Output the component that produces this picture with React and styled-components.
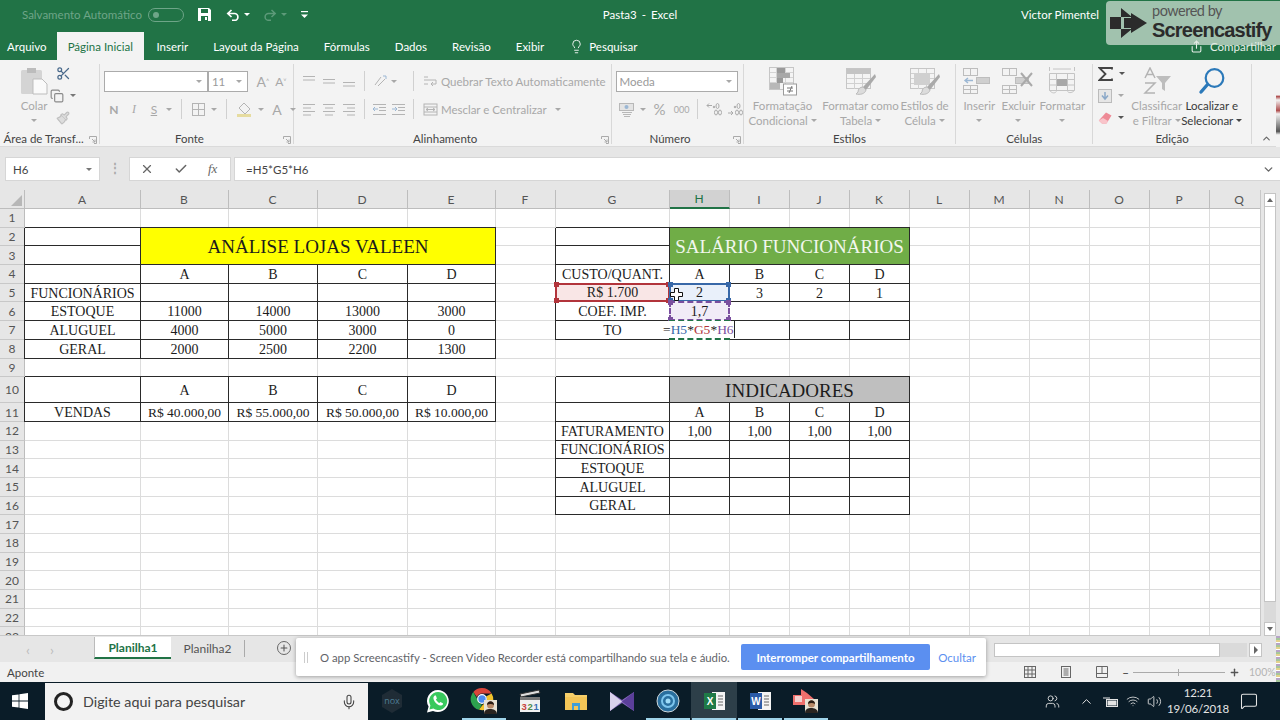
import React from "react";
import styled, { createGlobalStyle } from "styled-components";
import { Scissors, Copy, Paintbrush, Lightbulb, Share, ChevronUp, ChevronDown, X, Check, Plus, Mic, Users, Volume2, MessageSquare, Wifi } from "lucide-react";

const UI = `Lato, "Open Sans", "Liberation Sans", sans-serif`;
const SERIF = `"Liberation Serif", "Times New Roman", serif`;

const Global = createGlobalStyle`
  html, body { margin: 0; padding: 0; background: #fff; }
  * { box-sizing: border-box; }
`;

const Page = styled.div`
  position: relative;
  width: 1280px;
  height: 720px;
  overflow: hidden;
  display: flex;
  flex-direction: column;
  font-family: ${UI};
  font-size: 11.5px;
  color: #444;
  background: #f3f3f3;
`;

/* title + tabs */
const TitleBar = styled.div`
  height: 32px;
  padding-bottom: 3px;
  background: #217346;
  display: grid;
  grid-template-columns: 1fr auto 1fr;
  align-items: center;
  color: #fff;
`;
const Quick = styled.div`
  display: flex;
  align-items: center;
  padding-left: 22px;
`;
const AutoSave = styled.span`
  color: #6ea588;
  width: 126px;
  white-space: nowrap;
`;
const Toggle = styled.span`
  width: 36px;
  height: 14px;
  border: 1px solid #6ea588;
  border-radius: 8px;
  margin-right: 13px;
  display: flex;
  align-items: center;
  padding-left: 4px;
  &::before {
    content: "";
    width: 6px;
    height: 6px;
    border-radius: 50%;
    background: #6ea588;
  }
`;
const QuickBtn = styled.span`
  display: flex;
  align-items: center;
  gap: 4px;
  margin-right: ${p => p.$gap || 12}px;
`;
const Title = styled.div`
  word-spacing: 2px;
`;
const User = styled.div`
  justify-self: end;
  padding-right: 181px;
`;
const TabBar = styled.div`
  height: 28px;
  background: #217346;
  display: flex;
  align-items: stretch;
  padding-left: 7px;
  color: #fff;
`;
const Tab = styled.div`
  display: flex;
  align-items: center;
  padding: 0 ${p => (p.$active ? 11 : 12.5)}px;
  background: ${p => (p.$active ? "#f3f3f3" : "transparent")};
  color: ${p => (p.$active ? "#217346" : "#fff")};
  gap: 5px;
`;
const FileTab = styled(Tab)`
  margin-left: -7px;
  padding: 0 10px 0 7px;
`;
const ShareBox = styled.div`
  margin-left: auto;
  display: flex;
  align-items: center;
  gap: 7px;
  padding-right: 4px;
  color: #e8f0ea;
`;

/* ribbon */
const Ribbon = styled.div`
  height: 87px;
  display: flex;
  padding-top: 4px;
  background: #f3f3f3;
  border-bottom: 1px solid #dadada;
`;
const Group = styled.div`
  width: ${p => p.$w}px;
  height: 80px;
  display: flex;
  flex-direction: column;
  border-right: ${p => (p.$last ? "none" : "1px solid #d8d8d8")};
`;
const GroupBody = styled.div`
  height: 67px;
  flex: none;
  display: flex;
  padding-left: ${p => p.$pad || 0}px;
`;
const GroupLabel = styled.div`
  position: relative;
  height: 14px;
  line-height: 16px;
  flex: none;
  text-align: center;
  color: #444;
  padding-right: ${p => (p.$launch ? 14 : 0)}px;
  svg { position: absolute; right: 2px; top: 5px; }
`;
const CollapseRow = styled.div`
  height: 14px;
  padding: 2px 0 0 9px;
`;
const Stack = styled.div`
  display: flex;
  flex-direction: column;
  gap: 8px;
  padding-top: 7px;
`;
const Row = styled.div`
  height: 20px;
  display: flex;
  align-items: center;
`;
const Slot = styled.span`
  width: ${p => p.$w || 20}px;
  display: flex;
  justify-content: center;
  align-items: center;
  color: #a8a8a8;
  font-size: ${p => p.$size || 12}px;
  font-weight: ${p => (p.$bold ? 700 : 400)};
  font-style: ${p => (p.$italic ? "italic" : "normal")};
  text-decoration: ${p => (p.$under ? "underline" : "none")};
  font-family: ${p => (p.$serif ? SERIF : UI)};
`;
const Tiny = styled.sup`
  font-size: 7px;
`;
const VLine = styled.span`
  width: 1px;
  height: 20px;
  margin: 0 ${p => p.$mr ?? (p.$m || 7)}px 0 ${p => p.$m || 7}px;
  background: #d0d0d0;
`;
const Combo = styled.div`
  width: ${p => p.$w}px;
  height: 21px;
  margin-right: ${p => p.$mr || 0}px;
  background: #fff;
  border: 1px solid #ababab;
  display: flex;
  align-items: center;
  justify-content: space-between;
  padding: 0 5px 0 3px;
  color: #9a9a9a;
`;
const Caret = styled.span`
  width: 0;
  height: 0;
  border-left: 3px solid transparent;
  border-right: 3px solid transparent;
  border-top: 3px solid ${p => p.$color || "#a8a8a8"};
  display: inline-block;
`;
const BigButton = styled.div`
  width: ${p => p.$w}px;
  display: flex;
  flex-direction: column;
  align-items: center;
  color: ${p => (p.$on ? "#3a3a3a" : "#a8a8a8")};
  line-height: 15px;
  text-align: center;
  white-space: nowrap;
`;
const BigIcon = styled.div`
  height: 34px;
  flex: none;
  display: flex;
  align-items: center;
  justify-content: center;
`;
const CaretLine = styled.span`
  display: flex;
  align-items: center;
  gap: 3px;
  height: 15px;
`;
const SmallCol = styled.div`
  width: ${p => p.$w}px;
  display: flex;
  flex-direction: column;
  align-items: ${p => (p.$center ? "center" : "flex-start")};
  gap: 5px;
  padding-top: 1px;
`;
const SmallItem = styled.div`
  height: 17px;
  display: flex;
  align-items: center;
  gap: 6px;
`;
const Faded = styled.span`
  color: #a8a8a8;
  display: flex;
  align-items: center;
  gap: 3px;
  white-space: nowrap;
`;
const WrapCol = styled.div`
  display: flex;
  flex-direction: column;
  gap: 8px;
  padding-top: 7px;
  margin-left: 9px;
`;

/* formula bar */
const FormulaStrip = styled.div`
  height: 43px;
  background: #e6e6e6;
  padding: 10px 0 9px 5px;
  display: flex;
  align-items: stretch;
`;
const NameBox = styled.div`
  width: 95px;
  background: #fff;
  border: 1px solid #d6d6d6;
  display: flex;
  align-items: center;
  justify-content: space-between;
  padding: 0 7px;
  color: #444;
`;
const Dots = styled.span`
  width: 29px;
  text-align: center;
  color: #aaa;
  line-height: 22px;
  font-weight: 700;
`;
const FxBox = styled.div`
  width: 102px;
  margin-right: 3px;
  background: #fff;
  border: 1px solid #d6d6d6;
  display: flex;
  align-items: center;
  padding-left: 10px;
  overflow: hidden;
`;
const FxItem = styled.span`
  width: 34px;
  flex: none;
  display: flex;
  justify-content: flex-start;
  color: #666;
  font-family: ${p => (p.$serif ? SERIF : UI)};
  font-style: ${p => (p.$serif ? "italic" : "normal")};
  font-size: 13px;
`;
const FormulaInput = styled.div`
  flex: 1;
  background: #fff;
  border: 1px solid #d6d6d6;
  border-right: none;
  display: flex;
  align-items: center;
  justify-content: space-between;
  padding: 0 5px 0 11px;
  color: #444;
`;

/* sheet */
const SheetWrap = styled.div`
  height: 447px;
  display: flex;
  background: #e6e6e6;
`;
const SheetClip = styled.div`
  width: 1261px;
  height: 446px;
  overflow: hidden;
  border-right: 1px solid #c8c8c8;
  border-bottom: 1px solid #c8c8c8;
  background: #fff;
`;
const Sheet = styled.div`
  display: grid;
  grid-template-columns: ${p => p.$cols};
  grid-template-rows: ${p => p.$rows};
  width: 1270px;
`;
const Corner = styled.div`
  background: #e6e6e6;
  border-right: 1px solid #bdbdbd;
  border-bottom: 1px solid #bdbdbd;
  position: relative;
  &::after {
    content: "";
    position: absolute;
    right: 2px;
    bottom: 2px;
    border-left: 11px solid transparent;
    border-bottom: 11px solid #b7b7b7;
  }
`;
const ColHead = styled.div`
  display: flex;
  align-items: center;
  justify-content: center;
  padding-right: 1px;
  font-size: 12px;
  background: ${p => (p.$on ? "#d2d2d2" : "#e6e6e6")};
  color: ${p => (p.$on ? "#217346" : "#555")};
  border-right: 1px solid #bdbdbd;
  border-bottom: ${p => (p.$on ? "2px solid #217346" : "1px solid #bdbdbd")};
`;
const RowHead = styled.div`
  display: flex;
  align-items: center;
  justify-content: center;
  font-size: 12px;
  background: #e6e6e6;
  color: #555;
  border-right: 1px solid #bdbdbd;
  border-bottom: 1px solid #c8c8c8;
`;
const edgeShadow = e => {
  const s = [];
  if (e.includes("l")) s.push("-1px 0 0 #2a2a2a");
  if (e.includes("t")) s.push("0 -1px 0 #2a2a2a");
  return s.length ? s.join(",") : "none";
};
const Cell = styled.div`
  position: relative;
  min-width: 0;
  padding-top: 2px;
  display: flex;
  align-items: center;
  justify-content: center;
  white-space: nowrap;
  font-family: ${SERIF};
  font-size: ${p => p.$size || 14}px;
  color: ${p => p.$color || "#1c1c1c"};
  background: ${p => p.$bg || "#fff"};
  grid-column: span ${p => p.$cs || 1};
  grid-row: span ${p => p.$rs || 1};
  border-right: 1px solid ${p => ((p.$edges || "").includes("r") ? "#2a2a2a" : "#dcdcdc")};
  border-bottom: 1px solid ${p => ((p.$edges || "").includes("b") ? "#2a2a2a" : "#dcdcdc")};
  box-shadow: ${p => edgeShadow(p.$edges || "")};
`;
const RefBox = styled.div`
  position: absolute;
  inset: -1px;
  z-index: 2;
  padding-top: 1px;
  background: ${p => p.$fill};
  border: 2px ${p => (p.$dashed ? "dashed" : "solid")} ${p => p.$color};
  display: flex;
  align-items: center;
  justify-content: center;
`;
const Handle = styled.span`
  position: absolute;
  width: 5px;
  height: 5px;
  background: ${p => p.$color};
  top: ${p => (p.$y === "t" ? "-3px" : "auto")};
  bottom: ${p => (p.$y === "b" ? "-3px" : "auto")};
  left: ${p => (p.$x === "l" ? "-3px" : "auto")};
  right: ${p => (p.$x === "r" ? "-3px" : "auto")};
`;
const EditText = styled.div`
  position: absolute;
  z-index: 3;
  left: -7px;
  right: -6px;
  top: 0;
  bottom: 1px;
  padding-top: 1px;
  font-size: 13.5px;
  background: #fff;
  border-right: 1px solid #222;
  display: flex;
  align-items: center;
`;
const Ref = styled.span`
  color: ${p => p.$color};
`;
const MousePointer = styled.svg`
  position: absolute;
  left: -1px;
  top: 3px;
  z-index: 4;
`;

/* scroll */
const VScroll = styled.div`
  width: 19px;
  padding: 3px 4px 0 3px;
  display: flex;
  flex-direction: column;
  height: 446px;
`;
const ArrowBox = styled.div`
  height: 14px;
  background: #fff;
  border: 1px solid #c4c4c4;
  display: flex;
  align-items: center;
  justify-content: center;
  flex: none;
`;
const ScrollThumb = styled.div`
  flex: 1;
  background: #fff;
  border: 1px solid #c4c4c4;
  border-top: none;
`;
const ScrollRest = styled.div`
  height: 20px;
  background: #dadada;
`;
const TriUp = styled.span`
  border-left: 3px solid transparent;
  border-right: 3px solid transparent;
  border-bottom: 4px solid #666;
`;
const TriDown = styled.span`
  border-left: 3px solid transparent;
  border-right: 3px solid transparent;
  border-top: 4px solid #666;
`;
const TriRight = styled.span`
  border-top: 4px solid transparent;
  border-bottom: 4px solid transparent;
  border-left: 4px solid #666;
`;

/* sheet tabs + status */
const SheetTabs = styled.div`
  height: 25px;
  background: #e6e6e6;
  display: flex;
  align-items: stretch;
`;
const NavArrows = styled.div`
  width: 94px;
  display: flex;
  align-items: center;
  gap: 20px;
  padding-left: 26px;
  color: #bbb;
  font-size: 14px;
`;
const SheetTab = styled.div`
  width: ${p => p.$w}px;
  display: flex;
  align-items: center;
  justify-content: center;
  background: ${p => (p.$active ? "#fff" : "transparent")};
  color: ${p => (p.$active ? "#217346" : "#555")};
  font-weight: ${p => (p.$active ? 700 : 400)};
  font-size: 12px;
  border-bottom: ${p => (p.$active ? "2px solid #217346" : "none")};
  border-right: ${p => (p.$active ? "none" : "1px solid #aaa")};
  border-left: ${p => (p.$active ? "1px solid #bbb" : "none")};
  margin: ${p => (p.$active ? "0 0 3px" : "3px 0 5px")};
`;
const AddSheet = styled.div`
  width: 14px;
  height: 14px;
  margin: 4px 0 0 32px;
  border: 1px solid #666;
  border-radius: 50%;
  display: flex;
  align-items: center;
  justify-content: center;
  color: #555;
`;
const HScroll = styled.div`
  margin-left: auto;
  width: 286px;
  padding: 6px 18px 0 0;
  display: flex;
  align-items: flex-start;
`;
const HTrack = styled.div`
  width: 233px;
  height: 14px;
  background: #fff;
  border: 1px solid #c4c4c4;
`;
const HRest = styled.div`
  width: 28px;
  height: 14px;
  background: #dadada;
`;
const HArrow = styled(ArrowBox)`
  width: 13px;
  margin-left: 2px;
`;
const StatusBar = styled.div`
  height: 20px;
  background: #f1f1f1;
  display: flex;
  align-items: center;
  padding-left: 7px;
  color: #444;
`;
const StatusRight = styled.div`
  margin-left: auto;
  display: flex;
  align-items: center;
  padding-right: 5px;
  color: #555;
`;
const ViewBtn = styled.span`
  width: 36px;
  display: flex;
  justify-content: center;
`;
const ZoomTrack = styled.span`
  width: 92px;
  height: 1px;
  background: #aaa;
  margin: 0 4px;
  position: relative;
  &::after {
    content: "";
    position: absolute;
    left: 45px;
    top: -3px;
    width: 1px;
    height: 7px;
    background: #aaa;
  }
`;
const ZoomMinus = styled.span`
  font-weight: 700;
  margin-left: 2px;
`;
const ZoomPct = styled.span`
  color: #b4b4b4;
  margin-left: 9px;
  width: 26px;
  font-size: 10.5px;
  white-space: nowrap;
`;

/* taskbar */
const TaskBar = styled.div`
  height: 38px;
  background: #0a1c28;
  display: flex;
  align-items: stretch;
  color: #fff;
`;
const StartBtn = styled.div`
  width: 45px;
  padding-right: 5px;
  display: flex;
  align-items: center;
  justify-content: center;
`;
const SearchBox = styled.div`
  width: 323px;
  background: #f2f2f2;
  color: #444;
  font-size: 14.3px;
  display: flex;
  align-items: center;
  margin-top: 1px;
`;
const Ring = styled.span`
  width: 19px;
  height: 19px;
  border: 3px solid #222;
  border-radius: 50%;
  margin: 0 10px 0 9px;
`;
const MicSlot = styled.span`
  margin-left: auto;
  padding-right: 11px;
  display: flex;
  color: #444;
`;
const Apps = styled.div`
  display: flex;
  padding-left: 1px;
`;
const AppSlot = styled.div`
  position: relative;
  width: 46px;
  display: flex;
  align-items: center;
  justify-content: center;
  background: ${p => (p.$active ? "#2d3f49" : "transparent")};
  &::after {
    content: "";
    position: absolute;
    left: 1px;
    right: 1px;
    bottom: 0;
    height: 2px;
    background: ${p => (p.$open ? "#9fd4ea" : "transparent")};
  }
`;
const Tray = styled.div`
  margin-left: auto;
  display: flex;
  align-items: center;
  padding-right: 22px;
  color: #e4e4e4;
`;
const TraySlot = styled.span`
  width: ${p => p.$w || 22}px;
  display: flex;
  justify-content: center;
`;
const Clock = styled.div`
  width: 74px;
  margin: 0 5px 0 -3px;
  text-align: center;
  font-size: 11.5px;
  line-height: 16px;
  letter-spacing: -0.2px;
`;

/* overlays */
const Watermark = styled.div`
  position: absolute;
  left: 1106px;
  top: 1px;
  width: 174px;
  height: 44px;
  background: rgba(222, 232, 224, 0.68);
  border-radius: 4px 0 0 4px;
  display: flex;
  align-items: center;
  padding-left: 4px;
  overflow: hidden;
`;
const MarkText = styled.div`
  margin-left: 5px;
  color: #333;
  white-space: nowrap;
`;
const Powered = styled.div`
  font-size: 14.5px;
  line-height: 14px;
  letter-spacing: -0.5px;
  color: #555;
`;
const Brand = styled.div`
  font-family: "Liberation Sans", sans-serif;
  font-weight: 700;
  font-size: 20px;
  line-height: 25px;
  letter-spacing: -0.8px;
  color: #2b2b2b;
`;
const Notice = styled.div`
  position: absolute;
  left: 296px;
  top: 638px;
  width: 690px;
  height: 38px;
  background: #fff;
  box-shadow: 0 1px 4px rgba(0, 0, 0, 0.35);
  border-radius: 2px;
  display: flex;
  align-items: center;
  padding: 0 10px 0 8px;
  color: #5f6368;
  z-index: 6;
`;
const Grip = styled.span`
  width: 4px;
  height: 11px;
  border-left: 1px solid #ccc;
  border-right: 1px solid #ccc;
  margin-right: 12px;
`;
const NoticeText = styled.span`
  width: 421px;
  font-size: 11.35px;
  white-space: nowrap;
`;
const StopBtn = styled.div`
  width: 189px;
  height: 26px;
  border-radius: 2px;
  background: #5b8ff0;
  color: #fff;
  font-weight: 700;
  display: flex;
  align-items: center;
  justify-content: center;
`;
const HideLink = styled.span`
  margin-left: auto;
  color: #5b8ff0;
`;
const EdgeStrip = styled.div`
  position: absolute;
  right: 0;
  top: 636px;
  width: 4px;
  height: 46px;
  background: repeating-linear-gradient(180deg, #b6a4c8 0 2px, #a6c69a 2px 4px, #e4d28c 4px 6px, #fff 6px 7px);
`;
const EdgeDots = styled.div`
  position: absolute;
  right: 0;
  top: 60px;
  width: 4px;
  height: 87px;
  background: linear-gradient(180deg, #f3f3f3 0 40%, #b05050 42%, #f3f3f3 46%, #b05050 58%, #f3f3f3 62%, #555 82%, #f3f3f3 86%);
`;

const GRAY = "#b4b4b4";

const Launcher = () => (
  <svg width="8" height="8" viewBox="0 0 8 8" fill="none" stroke="#aaa" strokeWidth="1">
    <path d="M.5 3V.5H7.5V7.5H5M3 3l3 3M6 3.5V6H3.5" />
  </svg>
);
const Lines = ({ a = [12, 12, 12], align = "left", y = 0 }) => (
  <svg width="14" height="14" viewBox="0 0 14 14" stroke={GRAY} fill="none">
    {a.map((w, i) => {
      const x = align === "left" ? 1 : align === "right" ? 13 - w : 7 - w / 2;
      return <path key={i} d={`M${x} ${2.5 + y + i * 3.5}h${w}`} />;
    })}
  </svg>
);
const ArrowIndent = ({ dir }) => (
  <svg width="15" height="13" viewBox="0 0 15 13" stroke={GRAY} fill="none">
    <path d="M1 1.5h13M7 4.5h7M7 7.5h7M1 11.5h13" />
    <path d={dir === "l" ? "M6 6H1M3 4L1 6l2 2" : "M1 6h5M4 4l2 2-2 2"} stroke="#9bb7d4" />
  </svg>
);
const ClipIcon = () => (
  <svg width="28" height="28" viewBox="0 0 28 28">
    <rect x="1" y="3" width="21" height="24" rx="1.5" fill="#d4d4d4" />
    <rect x="7" y="1" width="9" height="5" fill="#bcbcbc" />
    <path d="M13 12h9l5 5v10H13z" fill="#fafafa" stroke="#bdbdbd" />
  </svg>
);
const SaveIcon = () => (
  <svg width="15" height="15" viewBox="0 0 15 15">
    <path d="M1 1h11l2 2v11H1z" fill="#fff" />
    <rect x="4" y="2" width="7" height="4" fill="#217346" />
    <rect x="4" y="9" width="7" height="5" fill="#217346" />
    <rect x="8" y="10" width="2" height="3" fill="#fff" />
  </svg>
);
const UndoIcon = () => (
  <svg width="14" height="12" viewBox="0 0 14 12" fill="none" stroke="#fff" strokeWidth="1.7">
    <path d="M5.5 1L1.8 4.5 5.5 8M2 4.5h6.5a3.4 3.4 0 010 6.8H6" />
  </svg>
);
const RedoIcon = () => (
  <svg width="14" height="12" viewBox="0 0 14 12" fill="none" stroke="#5d9a79" strokeWidth="1.5">
    <path d="M8.5 1l3.7 3.5L8.5 8M12 4.5H5.5a3.4 3.4 0 000 6.8H8" />
  </svg>
);
const Custom = () => (
  <svg width="7" height="8" viewBox="0 0 7 8" fill="#fff">
    <rect y="0" width="7" height="1.2" />
    <path d="M0 3.5h7L3.5 7z" />
  </svg>
);
const CondIcon = () => (
  <svg width="30" height="30" viewBox="0 0 30 30" fill="none">
    <rect x="1.5" y="1.5" width="24" height="22" fill="#f4f4f4" stroke="#c6c6c6" />
    <path d="M2 6.5h23M2 11.5h23M2 16.5h23M8.5 2v21M17.5 2v21" stroke="#d4d4d4" />
    <rect x="9" y="2" width="8" height="5" fill="#9a9a9a" />
    <rect x="9" y="7" width="13" height="5" fill="#a8a8a8" />
    <rect x="9" y="12" width="6" height="5" fill="#999" />
    <rect x="2" y="17" width="10" height="6" fill="#b8b8b8" />
    <rect x="15.5" y="18" width="13" height="11" fill="#fff" stroke="#9a9a9a" />
    <path d="M19 22h6M19 25h6M24 20l-3 7" stroke="#777" />
  </svg>
);
const BrushTable = ({ fill }) => (
  <svg width="32" height="29" viewBox="0 0 32 29" fill="none">
    <rect x="1.5" y="1.5" width="24" height="20" fill="#f4f4f4" stroke="#c6c6c6" />
    <path d="M2 6.5h23M2 11.5h23M2 16.5h23M9.5 2v20M17.5 2v20" stroke="#d0d0d0" />
    <rect x={fill ? 5 : 2} y={fill ? 6 : 2} width={fill ? 16 : 23} height={fill ? 12 : 5} fill={fill ? "#d0d0d0" : "#c4c4c4"} />
    <path d="M30 7L18 20l3 3L31 10z" fill="#aaa" />
    <path d="M18 20c-3 0-5 2-5 5l-2 2c4 1 9 0 10-4z" fill="#dcdcdc" stroke="#bbb" />
  </svg>
);
const CellsIcon = ({ kind }) => (
  <svg width="34" height="28" viewBox="0 0 34 28" fill="none" stroke="#bdbdbd">
    <rect x="1.5" y="1.5" width="14" height="7" />
    <path d="M8.5 1.5v7" />
    <rect x="1.5" y="18.5" width="14" height="8" />
    <path d="M8.5 18.5v8M1.5 22.5h14" />
    <rect x="14.5" y="10.5" width="13" height="6" fill="#cfcfcf" />
    {kind === "ins" ? (
      <path d="M11 13.5H3M6 11l-3 2.5L6 16" stroke="#9bb7d4" strokeWidth="1.4" />
    ) : (
      <path d="M20 6l11 13M31 6L20 19" stroke="#aaa" strokeWidth="2" />
    )}
  </svg>
);
const FormatIcon = () => (
  <svg width="28" height="30" viewBox="0 0 28 30" fill="none" stroke="#c4c4c4">
    <path d="M1.5 7.5h25v17h-25zM1.5 13.5h25M1.5 19h25M8.5 7.5v17M19.5 7.5v17M1.5 1v4M26.5 1v4M5 3h18" />
    <rect x="9" y="13" width="10" height="7" fill="#a8a8a8" stroke="none" />
    <path d="M1.5 24.5c3 3 5 3 7 1M19.5 25.5c2 2 5 1 7-1" />
  </svg>
);
const SortIcon = () => (
  <svg width="30" height="28" viewBox="0 0 30 28" fill="none" stroke="#b4b4b4" strokeWidth="1.5">
    <path d="M3 11L8 1l5 10M5 7.5h6M3 16h10L3 26h10" />
    <path d="M14 9h15l-6 7v8l-3-2v-6z" fill="#bdbdbd" stroke="none" />
  </svg>
);
const Magnifier = () => (
  <svg width="28" height="28" viewBox="0 0 28 28" fill="none">
    <circle cx="16.5" cy="11" r="8.8" stroke="#2b79b9" strokeWidth="2.2" />
    <path d="M9.5 17.5L3 25" stroke="#2b79b9" strokeWidth="3.4" strokeLinecap="round" />
  </svg>
);
const Sigma = () => (
  <svg width="15" height="14" viewBox="0 0 15 14" fill="none" stroke="#444" strokeWidth="1.8">
    <path d="M14 2.5V1H1.5L7.5 7l-6 6H14v-1.5" />
  </svg>
);
const FillBox = () => (
  <svg width="14" height="14" viewBox="0 0 14 14">
    <rect x="0.5" y="0.5" width="13" height="13" fill="#e6e6e6" stroke="#bbb" />
    <path d="M7 3v6M4 6.5L7 10l3-3.5" fill="none" stroke="#8aa8c8" strokeWidth="1.5" />
  </svg>
);
const Eraser = () => (
  <svg width="14" height="12" viewBox="0 0 14 12">
    <path d="M8 .5l5.5 3-5 8H4L.8 8.5z" fill="#ee8a96" />
    <path d="M.8 8.5L4 11.5h4.5L10 9 5 6z" fill="#f9c4ca" />
  </svg>
);
const CurrencyIcon = () => (
  <svg width="18" height="15" viewBox="0 0 18 15" fill="none" stroke="#b8b8b8">
    <rect x="1.5" y="1.5" width="14" height="7" fill="#e4e4e4" />
    <circle cx="8.5" cy="5" r="2" fill="#9bb7d4" stroke="none" />
    <path d="M4 10.5h10M5 12.5h8M6 14.5h6" />
  </svg>
);
const DecimalIcon = ({ up }) => (
  <svg width="16" height="14" viewBox="0 0 16 14" fill="none" stroke="#aaa">
    <path d={up ? "M1 3.5h5M3 1.5L1 3.5l2 2" : "M1 11h5M4 9l2 2-2 2"} />
    <circle cx="8" cy="5" r="0.8" fill="#aaa" />
    <ellipse cx="11.5" cy="4" rx="1.5" ry="2.5" />
    <ellipse cx="10" cy="10.5" rx="1.5" ry="2.5" />
    <ellipse cx="14" cy="10.5" rx="1.5" ry="2.5" />
  </svg>
);
const MergeIcon = () => (
  <svg width="15" height="13" viewBox="0 0 15 13" fill="none" stroke={GRAY}>
    <rect x="1" y="1" width="13" height="11" />
    <path d="M1 4h13M1 9h13M3 6.5h9M5 5L3 6.5 5 8M10 5l2 1.5L10 8" />
  </svg>
);
const WrapIcon = () => (
  <svg width="15" height="14" viewBox="0 0 15 14" fill="none" stroke={GRAY}>
    <path d="M1 3h4M1 6h12v4H8M10 8l-2 2 2 2M1 10h4" />
  </svg>
);
const OrientIcon = () => (
  <svg width="15" height="15" viewBox="0 0 15 15" fill="none" stroke={GRAY}>
    <path d="M3 11L9 3M6 12l7-7" />
    <path d="M11 2l3 0 0 3" stroke="#9bb7d4" />
  </svg>
);
const BorderIcon = () => (
  <svg width="13" height="13" viewBox="0 0 13 13" fill="none" stroke={GRAY}>
    <rect x="0.5" y="0.5" width="12" height="12" />
    <path d="M6.5 0v13M0 6.5h13" />
  </svg>
);
const BucketIcon = () => (
  <svg width="16" height="15" viewBox="0 0 16 15" fill="none" stroke={GRAY}>
    <path d="M7 1l6 6-5 5-6-6z" />
    <path d="M0 12h14v3H0z" fill="#e6dca0" stroke="none" />
  </svg>
);
const ViewGrid = () => (
  <svg width="12" height="12" viewBox="0 0 12 12" fill="none" stroke="#666">
    <rect x="0.5" y="0.5" width="11" height="11" />
    <path d="M4 0v12M8 0v12M0 4h12M0 8h12" />
  </svg>
);
const ViewPage = () => (
  <svg width="12" height="12" viewBox="0 0 12 12" fill="none" stroke="#666">
    <rect x="1.5" y="0.5" width="9" height="11" />
    <path d="M3.5 3h5M3.5 5h5M3.5 7h5M3.5 9h5" />
  </svg>
);
const ViewBreak = () => (
  <svg width="12" height="12" viewBox="0 0 12 12" fill="none" stroke="#666">
    <path d="M.5 11.5V.5h11v11zM.5 7.5h11M6 .5v7" />
  </svg>
);
const WinLogo = () => (
  <svg width="16" height="16" viewBox="0 0 16 16" fill="#fff">
    <path d="M0 2.3l6.6-.9v6.2H0zM7.4 1.3L16 0v7.6H7.4zM0 8.4h6.6v6.2L0 13.7zM7.4 8.4H16V16l-8.6-1.3z" />
  </svg>
);
const Nox = () => (
  <svg width="22" height="24" viewBox="0 0 22 24">
    <path d="M11 0l10 6v12l-10 6-10-6V6z" fill="#1f2c36" />
    <text x="11" y="15" fontSize="9" fill="#4f7f96" textAnchor="middle" fontFamily="Open Sans">nox</text>
  </svg>
);
const Whats = () => (
  <svg width="24" height="24" viewBox="0 0 24 24">
    <path d="M12 1a11 11 0 00-9.4 16.6L1 23.5l6-1.6A11 11 0 1012 1z" fill="#fff" />
    <path d="M12 3a9 9 0 00-7.6 13.6L3.4 20.6l4-1A9 9 0 1012 3z" fill="#38c95d" />
    <path d="M8.8 6.5c-1.6 1-2 3-.3 5.8 1.7 2.8 4.5 4.6 6.6 4.2 1-.2 2-1 2-2.1l-2.6-1.4-1.2 1.1c-1-.3-2.9-2.3-3.4-3.5l1-1.2-1-2.8z" fill="#fff" />
  </svg>
);
const Face = ({ x, y }) => (
  <g>
    <rect x={x} y={y} width="13" height="14" fill="#e8e2d4" />
    <path d={`M${x} ${y + 14}c0-4 3-5 6-5s7 1 7 5z`} fill="#2a2420" />
    <circle cx={x + 6.5} cy={y + 5} r="3.5" fill="#b98a68" />
    <path d={`M${x + 3} ${y + 5}c0-5 7-5 7 0-2-1.5-5-1.5-7 0z`} fill="#2a1c14" />
  </g>
);
const ChromeIcon = () => (
  <svg width="28" height="28" viewBox="0 0 28 28">
    <path d="M12 1a11 11 0 019.6 5.5H12a5.5 5.5 0 00-5.1 3.5L3.3 5A11 11 0 0112 1z" fill="#d9453a" />
    <path d="M3.3 5l4.4 8a5 5 0 004.3 4.500L9 22.800A11 11 0 013.300 5z" fill="#2da24e" />
    <path d="M21.6 6.5A11 11 0 019 22.6l4-5.2a5 5 0 003-8z" fill="#f2c32c" />
    <circle cx="12" cy="12" r="4.3" fill="#4b8bf0" stroke="#fff" strokeWidth="1.2" />
    <Face x={14} y={13} />
  </svg>
);
const Clapper = () => (
  <svg width="22" height="24" viewBox="0 0 22 24">
    <path d="M1 5l19-4 1 3-19 4z" fill="#ddd" stroke="#333" />
    <rect x="1" y="8" width="20" height="15" fill="#f1f1f1" />
    <rect x="1" y="8" width="20" height="3" fill="#777" />
    <text x="2.5" y="21" fontSize="9.5" fontWeight="700" fill="#c8433c" fontFamily="Liberation Sans">3</text>
    <text x="8.5" y="21" fontSize="9.5" fontWeight="700" fill="#4d8a4a" fontFamily="Liberation Sans">2</text>
    <text x="14.5" y="21" fontSize="9.5" fontWeight="700" fill="#3a6fb5" fontFamily="Liberation Sans">1</text>
  </svg>
);
const Folder = () => (
  <svg width="22" height="18" viewBox="0 0 22 18">
    <path d="M0 1h8l2 2h12v15H0z" fill="#f6cf6a" />
    <rect x="0" y="5" width="22" height="13" fill="#f3c557" />
    <path d="M7 11h8v7h-2v-4H9v4H7z" fill="#3f9ed8" />
  </svg>
);
const VsIcon = () => (
  <svg width="24" height="21" viewBox="0 0 24 21">
    <path d="M0 1l12 8 12-8v19L12 12 0 20z" fill="#8a6cc0" />
    <path d="M0 1l12 9.5L0 20z" fill="#d9d2ec" />
    <path d="M24 1L12 10.5 24 20z" fill="#5b3f9a" />
  </svg>
);
const GlobeIcon = () => (
  <svg width="24" height="24" viewBox="0 0 24 24" fill="none">
    <circle cx="12" cy="12" r="11" fill="#2a6f9e" stroke="#cfd8dc" />
    <circle cx="12" cy="12" r="6" stroke="#7ec6ee" strokeWidth="2" />
    <circle cx="12" cy="12" r="2.5" fill="#9fdcf8" />
  </svg>
);
const OfficeTile = ({ letter, bg, lines }) => (
  <svg width="21" height="20" viewBox="0 0 21 20">
    <rect x="8" y="1" width="13" height="18" fill="#f4f4f4" />
    <path d={lines} stroke="#666" fill="none" />
    <rect x="0" y="2" width="12" height="16" fill={bg} />
    <text x="6" y="14" fontSize="10" fontWeight="700" fill="#fff" textAnchor="middle" fontFamily="Liberation Sans">{letter}</text>
  </svg>
);
const PptLike = () => (
  <svg width="26" height="28" viewBox="0 0 26 28">
    <path d="M0 8l8 0 0-6 6 4 7 6-7 6H0z" fill="#ef6f6c" />
    <rect x="2" y="9" width="7" height="6" fill="#f4d0ce" />
    <Face x={12} y={12} />
  </svg>
);
const CastLogo = () => (
  <svg width="37" height="32" viewBox="0 0 37 32" fill="#2b2b2b">
    <rect x="0" y="10" width="11" height="12" />
    <path d="M11 1l11 9H11zM11 22h11L11 31zM14 11h7V6l16 10-16 10v-5h-7z" />
  </svg>
);

const COLS = ["A", "B", "C", "D", "E", "F", "G", "H", "I", "J", "K", "L", "M", "N", "O", "P", "Q"];
const COL_W = [116, 88, 89, 90, 88, 60, 114, 60, 60, 60, 60, 60, 60, 60, 60, 60, 60];
const ROW_COUNT = 23;
const rowH = r => (r === 10 ? 26 : 18.7);

const ALL = "lrtb";
const fill = (cols, rows, text = {}, edges = ALL, size) => {
  const out = {};
  cols.split("").forEach(c => rows.forEach(r => {
    out[c + r] = { edges, text: text[c + r], size };
  }));
  return out;
};

const cells = {
  ...fill("A", [2, 3, 4, 5, 6, 7, 8], { A5: "FUNCIONÁRIOS", A6: "ESTOQUE", A7: "ALUGUEL", A8: "GERAL" }),
  ...fill("BCDE", [4, 5, 6, 7, 8], {
    B4: "A", C4: "B", D4: "C", E4: "D",
    B6: "11000", C6: "14000", D6: "13000", E6: "3000",
    B7: "4000", C7: "5000", D7: "3000", E7: "0",
    B8: "2000", C8: "2500", D8: "2200", E8: "1300",
  }),
  B2: { edges: ALL, text: "ANÁLISE LOJAS VALEEN", cs: 4, rs: 2, bg: "#ffff00", size: 19 },
  ...fill("A", [10, 11], { A11: "VENDAS" }),
  ...fill("BCDE", [10], { B10: "A", C10: "B", D10: "C", E10: "D" }),
  ...fill("BCDE", [11], {
    B11: "R$ 40.000,00", C11: "R$ 55.000,00", D11: "R$ 50.000,00", E11: "R$ 10.000,00",
  }, ALL, 13.5),
  ...fill("G", [2, 3, 4, 6, 7], { G4: "CUSTO/QUANT.", G6: "COEF. IMP.", G7: "TO" }),
  H2: { edges: ALL, text: "SALÁRIO FUNCIONÁRIOS", cs: 4, rs: 2, bg: "#70ad47", color: "#f2f7ee", size: 19 },
  ...fill("HIJK", [4], { H4: "A", I4: "B", J4: "C", K4: "D" }),
  ...fill("IJK", [5], { I5: "3", J5: "2", K5: "1" }),
  ...fill("IJ", [6], {}, "b"),
  K6: { edges: "rb" },
  ...fill("IJK", [7]),
  G5: { edges: ALL, ref: { color: "#b2343b", fill: "#f9e6e6", text: "R$ 1.700" } },
  H5: { edges: ALL, ref: { color: "#3868a8", fill: "#e9f0fa", text: "2", pointer: true } },
  H6: { edges: ALL, ref: { color: "#7a4f9f", fill: "#f1ecf7", text: "1,7", dashed: true } },
  H7: { edges: ALL, ref: { color: "#217346", fill: "#fff", dashed: true }, editing: true },
  ...fill("G", [10, 11, 12, 13, 14, 15, 16], {
    G12: "FATURAMENTO", G13: "FUNCIONÁRIOS", G14: "ESTOQUE", G15: "ALUGUEL", G16: "GERAL",
  }),
  H10: { edges: ALL, text: "INDICADORES", cs: 4, bg: "#bfbfbf", size: 19 },
  ...fill("HIJK", [11, 12, 13, 14, 15, 16], {
    H11: "A", I11: "B", J11: "C", K11: "D",
    H12: "1,00", I12: "1,00", J12: "1,00", K12: "1,00",
  }),
};

// cells hidden under a merge
const covered = new Set(["C2", "D2", "E2", "B3", "C3", "D3", "E3", "I2", "J2", "K2", "H3", "I3", "J3", "K3", "I10", "J10", "K10"]);

const SheetCell = ({ id }) => {
  const c = cells[id] || {};
  const { ref } = c;
  return (
    <Cell $edges={c.edges} $cs={c.cs} $rs={c.rs} $bg={c.bg} $color={c.color} $size={c.size}>
      {c.text}
      {ref && (
        <RefBox $color={ref.color} $fill={ref.fill} $dashed={ref.dashed}>
          {ref.text}
          {!c.editing && <Handle $color={ref.color} $x="l" $y="t" />}
          {!c.editing && <Handle $color={ref.color} $x="r" $y="t" />}
          {!c.editing && <Handle $color={ref.color} $x="l" $y="b" />}
          {!c.editing && <Handle $color={ref.color} $x="r" $y="b" />}
          {ref.pointer && (
            <MousePointer width="13" height="13" viewBox="0 0 13 13">
              <path d="M4.5.5h4v4h4v4h-4v4h-4v-4h-4v-4h4z" fill="#fff" stroke="#111" />
            </MousePointer>
          )}
        </RefBox>
      )}
      {c.editing && (
        <EditText>
          =<Ref $color="#3868a8">H5</Ref>*<Ref $color="#b2343b">G5</Ref>*<Ref $color="#7a4f9f">H6</Ref>
        </EditText>
      )}
    </Cell>
  );
};

const Grid = () => {
  const rows = Array.from({ length: ROW_COUNT }, (_, i) => i + 1);
  return (
    <Sheet
      $cols={`25px ${COL_W.map(w => w + "px").join(" ")}`}
      $rows={`19px ${rows.map(r => rowH(r) + "px").join(" ")}`}
    >
      <Corner />
      {COLS.map(c => <ColHead key={c} $on={c === "H"}>{c}</ColHead>)}
      {rows.map(r => (
        <React.Fragment key={r}>
          <RowHead>{r}</RowHead>
          {COLS.filter(c => !covered.has(c + r)).map(c => <SheetCell key={c + r} id={c + r} />)}
        </React.Fragment>
      ))}
    </Sheet>
  );
};

const RibbonBar = () => (
  <Ribbon>
    <Group $w={100}>
      <GroupBody $pad={18}>
        <BigButton $w={32}>
          <BigIcon><ClipIcon /></BigIcon>
          <span>Colar</span>
          <CaretLine><Caret /></CaretLine>
        </BigButton>
        <SmallCol $w={26} $center>
          <SmallItem><Scissors size={15} color="#4a6a8c" /></SmallItem>
          <SmallItem><Copy size={14} color="#8a8a8a" /><Caret $color="#777" /></SmallItem>
          <SmallItem><Paintbrush size={14} color="#c0c0c0" fill="#ddd" /></SmallItem>
        </SmallCol>
      </GroupBody>
      <GroupLabel>Área de Transf...&nbsp;&nbsp;&nbsp;&nbsp;<Launcher /></GroupLabel>
    </Group>

    <Group $w={194}>
      <GroupBody $pad={4}>
        <Stack>
          <Row>
            <Combo $w={104}><span /><Caret /></Combo>
            <Combo $w={40} $mr={6}>11<Caret /></Combo>
            <Slot $w={18} $size={14}>A<Tiny>˄</Tiny></Slot>
            <Slot $w={18} $size={12}>A<Tiny>˅</Tiny></Slot>
          </Row>
          <Row>
            <Slot $bold>N</Slot>
            <Slot $italic $serif>I</Slot>
            <Slot $under>S</Slot>
            <Slot $w={10}><Caret /></Slot>
            <VLine />
            <Slot><BorderIcon /></Slot>
            <Slot $w={10}><Caret /></Slot>
            <VLine />
            <Slot $w={22}><BucketIcon /></Slot>
            <Slot $w={10}><Caret /></Slot>
            <Slot $w={22} $size={14}>A</Slot>
            <Slot $w={10}><Caret /></Slot>
          </Row>
        </Stack>
      </GroupBody>
      <GroupLabel $launch>Fonte<Launcher /></GroupLabel>
    </Group>

    <Group $w={318}>
      <GroupBody $pad={5}>
        <Stack>
          <Row>
            <Slot><Lines a={[12, 12]} y={0} /></Slot>
            <Slot><Lines a={[12, 12]} y={3} /></Slot>
            <Slot><Lines a={[12, 12]} y={6} /></Slot>
            <VLine $m={5} />
            <Slot $w={20}><OrientIcon /></Slot>
            <Slot $w={9}><Caret /></Slot>
            <VLine $m={14} $mr={0} />
          </Row>
          <Row>
            <Slot><Lines a={[12, 8, 12, 8]} /></Slot>
            <Slot><Lines a={[12, 8, 12, 8]} align="center" /></Slot>
            <Slot><Lines a={[12, 8, 12, 8]} align="right" /></Slot>
            <VLine $m={5} />
            <Slot $w={19}><ArrowIndent dir="l" /></Slot>
            <Slot $w={19}><ArrowIndent dir="r" /></Slot>
            <VLine $m={5} $mr={0} />
          </Row>
        </Stack>
        <WrapCol>
          <Row><Faded><WrapIcon />Quebrar Texto Automaticamente</Faded></Row>
          <Row><Faded><MergeIcon />Mesclar e Centralizar&nbsp;&nbsp;<Caret /></Faded></Row>
        </WrapCol>
      </GroupBody>
      <GroupLabel $launch>Alinhamento<Launcher /></GroupLabel>
    </Group>

    <Group $w={132}>
      <GroupBody $pad={4}>
        <Stack>
          <Row><Combo $w={122}>Moeda<Caret /></Combo></Row>
          <Row>
            <Slot $w={22}><CurrencyIcon /></Slot>
            <Slot $w={10}><Caret /></Slot>
            <Slot $w={24} $size={15}>%</Slot>
            <Slot $w={20} $size={9}>000</Slot>
            <VLine $m={5} />
            <Slot $w={22}><DecimalIcon up /></Slot>
            <Slot $w={20}><DecimalIcon /></Slot>
          </Row>
        </Stack>
      </GroupBody>
      <GroupLabel $launch>Número<Launcher /></GroupLabel>
    </Group>

    <Group $w={213}>
      <GroupBody>
        <BigButton $w={78}><BigIcon><CondIcon /></BigIcon>Formatação<CaretLine>Condicional<Caret /></CaretLine></BigButton>
        <BigButton $w={78}><BigIcon><BrushTable /></BigIcon>Formatar como<CaretLine>Tabela<Caret /></CaretLine></BigButton>
        <BigButton $w={50}><BigIcon><BrushTable fill /></BigIcon>Estilos de<CaretLine>Célula<Caret /></CaretLine></BigButton>
      </GroupBody>
      <GroupLabel>Estilos</GroupLabel>
    </Group>

    <Group $w={137}>
      <GroupBody $pad={4}>
        <BigButton $w={38}><BigIcon><CellsIcon kind="ins" /></BigIcon>Inserir<CaretLine><Caret /></CaretLine></BigButton>
        <BigButton $w={40}><BigIcon><CellsIcon kind="del" /></BigIcon>Excluir<CaretLine><Caret /></CaretLine></BigButton>
        <BigButton $w={48}><BigIcon><FormatIcon /></BigIcon>Formatar<CaretLine><Caret /></CaretLine></BigButton>
      </GroupBody>
      <GroupLabel>Células</GroupLabel>
    </Group>

    <Group $w={159}>
      <GroupBody $pad={5}>
        <SmallCol $w={31}>
          <SmallItem><Sigma /><Caret $color="#555" /></SmallItem>
          <SmallItem><FillBox /><Caret /></SmallItem>
          <SmallItem><Eraser /><Caret $color="#555" /></SmallItem>
        </SmallCol>
        <BigButton $w={55}><BigIcon><SortIcon /></BigIcon>Classificar<CaretLine>e Filtrar<Caret /></CaretLine></BigButton>
        <BigButton $w={55} $on><BigIcon><Magnifier /></BigIcon>Localizar e<CaretLine>Selecionar<Caret $color="#444" /></CaretLine></BigButton>
      </GroupBody>
      <GroupLabel>Edição</GroupLabel>
    </Group>

    <Group $w={28} $last>
      <GroupBody />
      <CollapseRow><ChevronUp size={11} color="#666" strokeWidth={2.5} /></CollapseRow>
    </Group>
  </Ribbon>
);

const TABS = ["Inserir", "Layout da Página", "Fórmulas", "Dados", "Revisão", "Exibir"];
const TILE_LINES = "M14 5h5M14 8h5M14 11h5M14 14h5";
const TASK_APPS = [
  { key: "nox", icon: <Nox /> },
  { key: "wa", icon: <Whats /> },
  { key: "chrome", icon: <ChromeIcon />, open: true },
  { key: "mpc", icon: <Clapper /> },
  { key: "folder", icon: <Folder /> },
  { key: "vs", icon: <VsIcon /> },
  { key: "globe", icon: <GlobeIcon />, open: true },
  { key: "excel", icon: <OfficeTile letter="X" bg="#1f7a47" lines={TILE_LINES} />, open: true, active: true },
  { key: "word", icon: <OfficeTile letter="W" bg="#2a5ba8" lines={TILE_LINES} />, open: true },
  { key: "ppt", icon: <PptLike />, open: true },
];

export default function App() {
  return (
    <Page>
      <Global />
      <TitleBar>
        <Quick>
          <AutoSave>Salvamento Automático</AutoSave>
          <Toggle />
          <QuickBtn $gap={14}><SaveIcon /></QuickBtn>
          <QuickBtn $gap={13}><UndoIcon /><Caret $color="#fff" /></QuickBtn>
          <QuickBtn $gap={14}><RedoIcon /><Caret $color="#5d9a79" /></QuickBtn>
          <Custom />
        </Quick>
        <Title>Pasta3 - Excel</Title>
        <User>Victor Pimentel</User>
      </TitleBar>
      <TabBar>
        <FileTab>Arquivo</FileTab>
        <Tab $active>Página Inicial</Tab>
        {TABS.map(t => <Tab key={t}>{t}</Tab>)}
        <Tab><Lightbulb size={15} strokeWidth={1.4} />Pesquisar</Tab>
        <ShareBox><Share size={13} />Compartilhar</ShareBox>
      </TabBar>
      <RibbonBar />
      <FormulaStrip>
        <NameBox>H6<Caret $color="#777" /></NameBox>
        <Dots>⋮</Dots>
        <FxBox>
          <FxItem><X size={14} /></FxItem>
          <FxItem><Check size={14} strokeWidth={2.6} /></FxItem>
          <FxItem $serif>fx</FxItem>
        </FxBox>
        <FormulaInput>=H5*G5*H6<ChevronDown size={13} color="#666" strokeWidth={2.5} /></FormulaInput>
      </FormulaStrip>
      <SheetWrap>
        <SheetClip><Grid /></SheetClip>
        <VScroll>
          <ArrowBox><TriUp /></ArrowBox>
          <ScrollThumb />
          <ScrollRest />
          <ArrowBox><TriDown /></ArrowBox>
        </VScroll>
      </SheetWrap>
      <SheetTabs>
        <NavArrows><span>‹</span><span>›</span></NavArrows>
        <SheetTab $w={77} $active>Planilha1</SheetTab>
        <SheetTab $w={74}>Planilha2</SheetTab>
        <AddSheet><Plus size={10} strokeWidth={2.5} /></AddSheet>
        <HScroll>
          <HTrack />
          <HRest />
          <HArrow><TriRight /></HArrow>
        </HScroll>
      </SheetTabs>
      <StatusBar>
        Aponte
        <StatusRight>
          <ViewBtn><ViewGrid /></ViewBtn>
          <ViewBtn><ViewPage /></ViewBtn>
          <ViewBtn><ViewBreak /></ViewBtn>
          <ZoomMinus>–</ZoomMinus>
          <ZoomTrack />
          <Plus size={11} strokeWidth={3} />
          <ZoomPct>100%</ZoomPct>
        </StatusRight>
      </StatusBar>
      <TaskBar>
        <StartBtn><WinLogo /></StartBtn>
        <SearchBox>
          <Ring />
          Digite aqui para pesquisar
          <MicSlot><Mic size={16} strokeWidth={1.6} /></MicSlot>
        </SearchBox>
        <Apps>
          {TASK_APPS.map(a => <AppSlot key={a.key} $open={a.open} $active={a.active}>{a.icon}</AppSlot>)}
        </Apps>
        <Tray>
          <TraySlot $w={44}><Users size={15} strokeWidth={1.4} /></TraySlot>
          <TraySlot $w={24}><ChevronUp size={15} strokeWidth={1.6} /></TraySlot>
          <TraySlot $w={24}>
            <svg width="15" height="11" viewBox="0 0 15 11" fill="none" stroke="#e4e4e4"><rect x="3.5" y="3.5" width="11" height="7" /><rect x="5" y="5" width="8" height="4" fill="#e4e4e4" /><path d="M0 2h7" /></svg>
          </TraySlot>
          <TraySlot $w={22}><Wifi size={14} strokeWidth={1.4} /></TraySlot>
          <TraySlot $w={20}><Volume2 size={15} strokeWidth={1.4} /></TraySlot>
          <Clock>12:21<br />19/06/2018</Clock>
          <MessageSquare size={18} strokeWidth={1.4} />
        </Tray>
      </TaskBar>
      <Watermark>
        <CastLogo />
        <MarkText>
          <Powered>powered by</Powered>
          <Brand>Screencastify</Brand>
        </MarkText>
      </Watermark>
      <Notice>
        <Grip />
        <NoticeText>O app Screencastify - Screen Video Recorder está compartilhando sua tela e áudio.</NoticeText>
        <StopBtn>Interromper compartilhamento</StopBtn>
        <HideLink>Ocultar</HideLink>
      </Notice>
      <EdgeStrip />
      <EdgeDots />
    </Page>
  );
}
